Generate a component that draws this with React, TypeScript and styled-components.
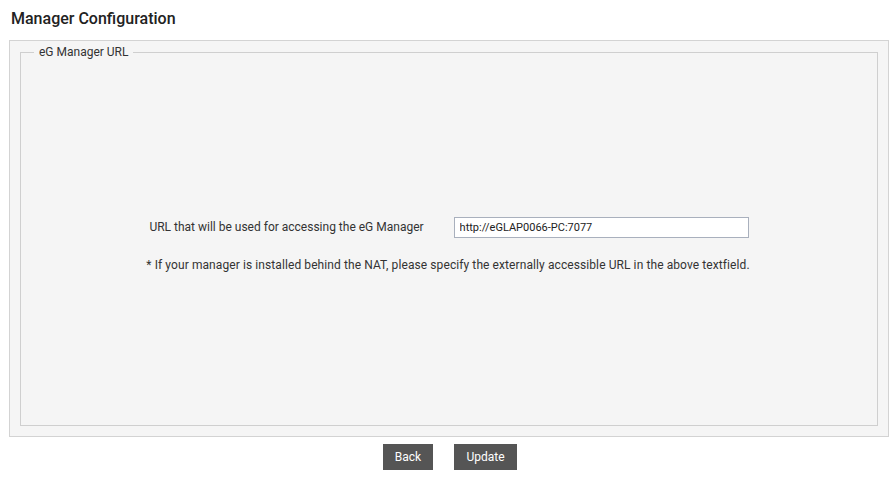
import React from "react";
import styled, { createGlobalStyle } from "styled-components";

const Global = createGlobalStyle`
  html, body { margin: 0; padding: 0; background: #ffffff; }
  body { font-family: Roboto, "Liberation Sans", Arial, sans-serif; color: #333333; }
`;

const Page = styled.div`
  width: 893px;
  height: 477px;
  display: flex;
  flex-direction: column;
`;

const Title = styled.h1`
  margin: 0;
  height: 40px;
  display: flex;
  align-items: center;
  padding-left: 11px;
  padding-bottom: 3px;
  box-sizing: border-box;
  font-size: 16px;
  font-weight: 500;
  color: #222222;
`;

const Panel = styled.div`
  margin: 0 4px 0 9px;
  height: 397px;
  box-sizing: border-box;
  background: #f5f5f5;
  border: 1px solid #d3d3d3;
  padding: 0 10px 10px 10px;
  display: flex;
`;

const Fieldset = styled.fieldset`
  flex: 1;
  margin: 0;
  border: 1px solid #cfcfcf;
  padding: 0 10px 16px 10px;
  min-width: 0;
  display: flex;
  flex-direction: column;
  justify-content: center;
  align-items: center;
  gap: 20px;
`;

const Legend = styled.legend`
  margin-left: 3px;
  padding: 0 5px;
  font-size: 12px;
  color: #333333;
  line-height: 22px;
`;

const Row = styled.div`
  display: flex;
  align-items: center;
  gap: 30px;
  margin-top: 16px;
`;

const Label = styled.label`
  font-size: 12px;
  color: #333333;
`;

const Input = styled.input`
  width: 295px;
  height: 21px;
  box-sizing: border-box;
  border: 1px solid #a9b0bd;
  background: #ffffff;
  padding: 0 5px;
  font-family: Roboto, "Liberation Sans", Arial, sans-serif;
  font-size: 11px;
  color: #222222;
  outline: none;
`;

const Note = styled.div`
  font-size: 12px;
  color: #333333;
  letter-spacing: 0.09px;
  margin-left: -2px;
`;

const Actions = styled.div`
  display: flex;
  justify-content: center;
  gap: 21px;
  margin-top: 7px;
  padding-left: 7px;
`;

const Button = styled.button<{ $w: number }>`
  width: ${(p) => p.$w}px;
  height: 26px;
  border: none;
  background: #555555;
  color: #ffffff;
  font-family: Roboto, "Liberation Sans", Arial, sans-serif;
  font-size: 12px;
  padding: 0;
  cursor: pointer;
`;

export default function App() {
  return (
    <>
      <Global />
      <Page>
        <Title>Manager Configuration</Title>
        <Panel>
          <Fieldset>
            <Legend>eG Manager URL</Legend>
            <Row>
              <Label>URL that will be used for accessing the eG Manager</Label>
              <Input defaultValue="http://eGLAP0066-PC:7077" />
            </Row>
            <Note>
              * If your manager is installed behind the NAT, please specify the externally accessible URL in the above textfield.
            </Note>
          </Fieldset>
        </Panel>
        <Actions>
          <Button $w={50}>Back</Button>
          <Button $w={63}>Update</Button>
        </Actions>
      </Page>
    </>
  );
}
